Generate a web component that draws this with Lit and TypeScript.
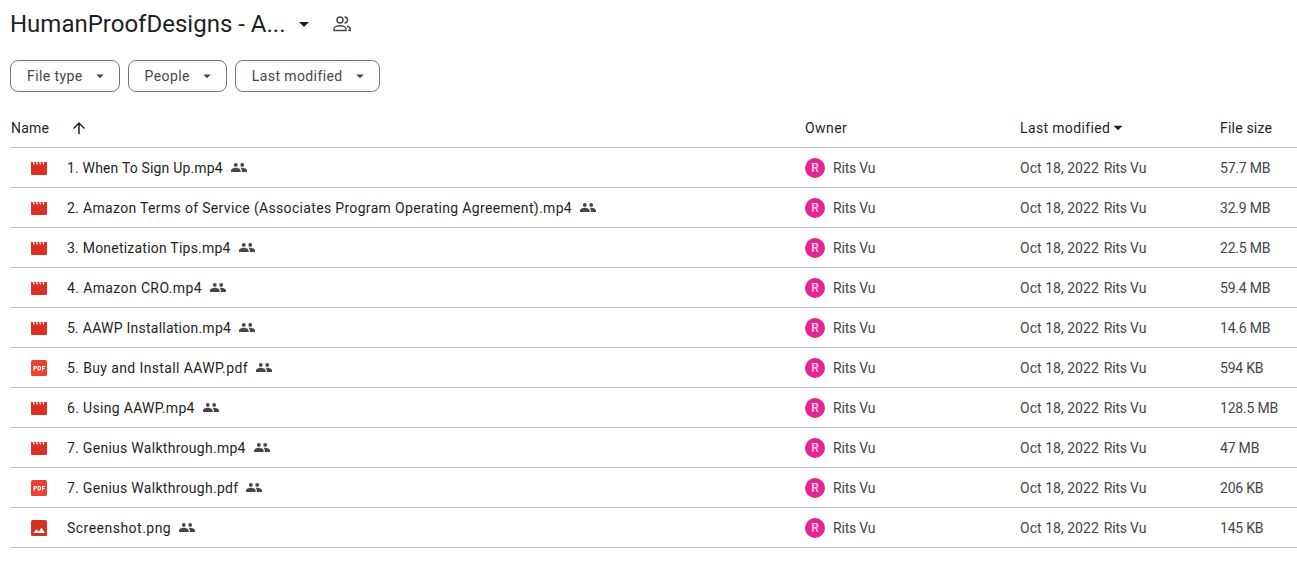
import { LitElement, html, css } from "lit";
import { customElement } from "lit/decorators.js";

type Kind = "video" | "pdf" | "image";
const files: { name: string; kind: Kind; size: string; track: number }[] = [
  { name: "1. When To Sign Up.mp4", kind: "video", size: "57.7 MB", track: 0.17 },
  { name: "2. Amazon Terms of Service (Associates Program Operating Agreement).mp4", kind: "video", size: "32.9 MB", track: 0.33 },
  { name: "3. Monetization Tips.mp4", kind: "video", size: "22.5 MB", track: 0.22 },
  { name: "4. Amazon CRO.mp4", kind: "video", size: "59.4 MB", track: 0.38 },
  { name: "5. AAWP Installation.mp4", kind: "video", size: "14.6 MB", track: 0.24 },
  { name: "5. Buy and Install AAWP.pdf", kind: "pdf", size: "594 KB", track: 0.38 },
  { name: "6. Using AAWP.mp4", kind: "video", size: "128.5 MB", track: 0.32 },
  { name: "7. Genius Walkthrough.mp4", kind: "video", size: "47 MB", track: 0.28 },
  { name: "7. Genius Walkthrough.pdf", kind: "pdf", size: "206 KB", track: 0.28 },
  { name: "Screenshot.png", kind: "image", size: "145 KB", track: 0.48 },
];

@customElement("app-root")
export class AppRoot extends LitElement {
  static styles = css`
    :host {
      display: block;
      height: 563px;
      overflow: hidden;
      background: #fff;
      padding-left: 10px;
      font-family: Roboto, "Liberation Sans", sans-serif;
      color: #1f1f1f;
    }
    .title-row {
      display: flex;
      align-items: center;
      height: 48px;
    }
    .title {
      font-size: 24px;
      font-weight: 400;
      width: 276px;
      white-space: nowrap;
      line-height: 48px;
      color: #1f1f1f;
    }
    .title-caret { width: 24px; height: 24px; fill: #1f1f1f; margin-left: 6px; }
    .title-people { width: 18px; height: 16px; fill: none; stroke: #444746; stroke-width: 1.5; margin-left: 17px; }
    .chips {
      display: flex;
      gap: 8px;
      margin-top: 12px;
    }
    .chip {
      height: 30px;
      border: 1px solid #747775;
      border-radius: 8px;
      display: flex;
      align-items: center;
      padding: 0 10px 0 16px;
      font-size: 14px;
      letter-spacing: 0.4px;
      color: #444746;
    }
    .chip svg { width: 18px; height: 18px; fill: #444746; margin-left: 8px; }
    .row {
      display: grid;
      grid-template-columns: 795px 215px 200px 1fr;
      align-items: center;
      height: 39px;
      border-bottom: 1px solid #c7c7c7;
      font-size: 14px;
      letter-spacing: 0.2px;
    }
    .head { margin-top: 16px; }
    .head .name { display: flex; align-items: center; padding-left: 1px; }
    .head .arrow { width: 18px; height: 18px; fill: #1f1f1f; margin-left: 21px; }
    .wide { letter-spacing: 0.45px; }
    .sort { display: flex; align-items: center; letter-spacing: 0.36px; }
    .sort svg { width: 18px; height: 18px; fill: #1f1f1f; margin-left: -1px; }
    .name-cell { display: flex; align-items: center; min-width: 0; white-space: nowrap; }
    .icon { width: 16px; height: 16px; margin-left: 21px; margin-right: 20px; flex: none; display: block; }
    .shared { width: 16px; height: 9px; fill: #444746; margin-left: 8px; flex: none; }
    .owner { display: flex; align-items: center; color: #444746; letter-spacing: -0.2px; }
    .avatar {
      width: 20px;
      height: 20px;
      border-radius: 50%;
      background: #e52592;
      color: #fbcfe4;
      font-size: 12px;
      font-weight: 500;
      letter-spacing: 0;
      display: flex;
      align-items: center;
      justify-content: center;
      margin-right: 8px;
    }
    .modified { color: #444746; white-space: nowrap; display: flex; gap: 5px; }
    .date { letter-spacing: 0.03px; }
    .by { letter-spacing: -0.2px; }
    .size { color: #444746; white-space: nowrap; letter-spacing: -0.2px; }
  `;

  private icon(kind: Kind) {
    if (kind === "video")
      return html`<svg class="icon" viewBox="0 0 16 16"><path fill="#d93025" d="M0 2h1.600l1 2.600h1.200L2.800 2h2l1 2.600H7L6 2h2l1 2.600h1.200L9.200 2h2l1 2.600h1.200L12.400 2H16v12a1 1 0 0 1-1 1H1a1 1 0 0 1-1-1z"/></svg>`;
    if (kind === "pdf")
      return html`<svg class="icon" viewBox="0 0 16 16"><rect width="16" height="16" rx="1.500" fill="#ea4335"/><path fill="#fff" d="M2.500 6h2.200c.8 0 1.300.5 1.300 1.300s-.5 1.400-1.300 1.400H3.600V10.500H2.500V6zm1.100 1v.8h.9c.3 0 .4-.2.4-.4s-.1-.4-.4-.4h-.9zM6.700 6h1.600c1.200 0 1.900.9 1.900 2.250s-.7 2.250-1.900 2.250H6.700V6zm1.100 1v2.500h.4c.6 0 .9-.5.9-1.250S8.800 7 8.200 7h-.4zM11 6h3v1h-1.900v.9h1.600v1h-1.600v1.600H11V6z"/></svg>`;
    return html`<svg class="icon" viewBox="0 0 16 16"><rect width="16" height="16" rx="1.500" fill="#d93025"/><path fill="#fff" d="M2.500 13l2.800-3.800 2 2.400 1.700-1.300-.2-.2 1.700-2.300 3.500 5.200z"/></svg>`;
  }

  render() {
    return html`
      <div class="title-row">
        <div class="title">HumanProofDesigns - A...</div>
        <svg class="title-caret" viewBox="0 0 24 24"><path d="M7 10l5 5 5-5z"/></svg>
        <svg class="title-people" viewBox="0 0 18 16"><circle cx="7" cy="4" r="3"/><path d="M1 14.500v-1.700C1 11 4 9.800 7 9.800s6 1.200 6 3v1.700zM11.500 1a3 3 0 0 1 0 6M14 10.200c1.800.4 3.200 1.300 3.200 2.600v1.700h-2"/></svg>
      </div>
      <div class="chips">
        ${["File type", "People", "Last modified"].map(
          (c) => html`<div class="chip">${c}<svg viewBox="0 0 24 24"><path d="M7 10l5 5 5-5z"/></svg></div>`
        )}
      </div>
      <div class="row head">
        <div class="name">Name<svg class="arrow" viewBox="0 0 24 24"><path d="M4 12l1.400 1.400L11 7.800V20h2V7.800l5.600 5.600L20 12l-8-8z"/></svg></div>
        <div class="wide">Owner</div>
        <div class="sort">Last modified<svg viewBox="0 0 24 24"><path d="M6 9l6 6 6-6z"/></svg></div>
        <div>File size</div>
      </div>
      ${files.map(
        (f) => html`<div class="row">
          <div class="name-cell">
            ${this.icon(f.kind)}<span style="letter-spacing:${f.track}px">${f.name}</span>
            <svg class="shared" viewBox="0 0 16 9"><circle cx="4.800" cy="1.900" r="1.900"/><circle cx="11.200" cy="1.900" r="1.900"/><path d="M0 9V7.600C0 5.800 3 4.800 4.800 4.800s4.800 1 4.800 2.800V9zM10.800 9V7.400c0-1-.4-1.800-1.100-2.400.5-.1 1-.2 1.500-.2 1.800 0 4.800 1 4.800 2.800V9z"/></svg>
          </div>
          <div class="owner"><span class="avatar">R</span>Rits Vu</div>
          <div class="modified"><span class="date">Oct 18, 2022</span><span class="by">Rits Vu</span></div>
          <div class="size">${f.size}</div>
        </div>`
      )}
    `;
  }
}
